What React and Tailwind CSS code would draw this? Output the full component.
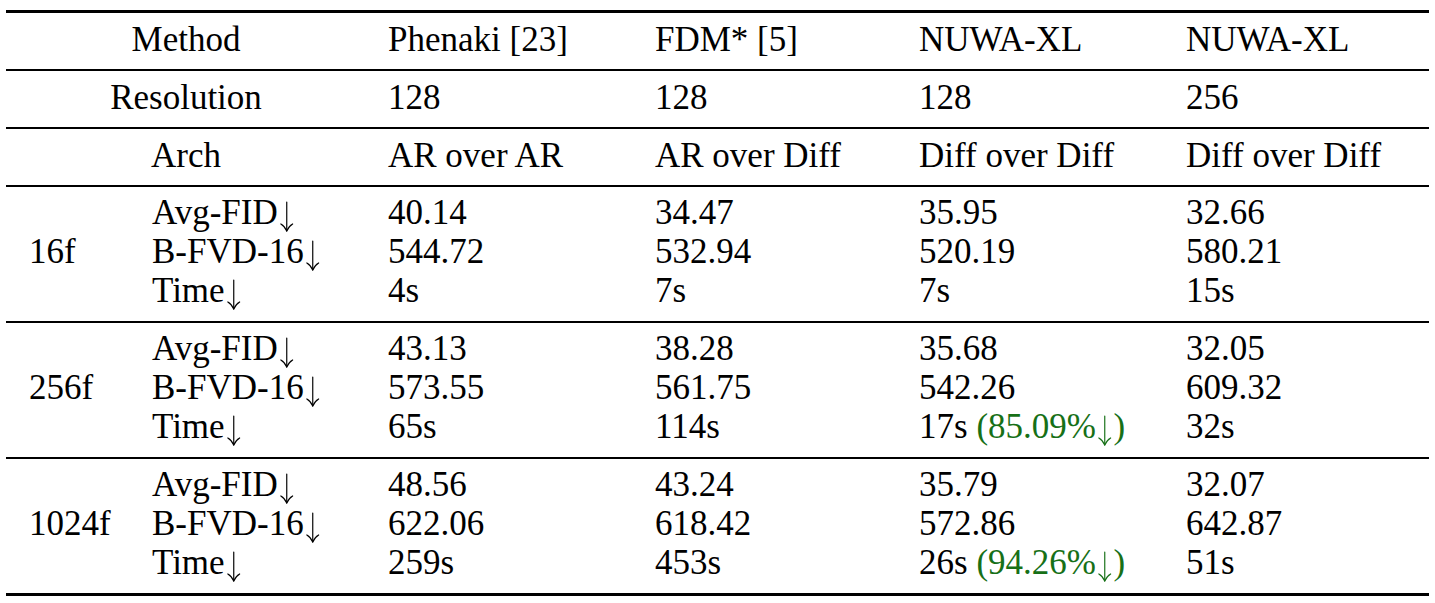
import React from 'react';

const cols = 'grid grid-cols-[146px_236px_267px_264px_267px_243px]';

// thin math-style down arrow (\downarrow)
function Down() {
  return (
    <svg
      viewBox="0 0 50 94"
      className="inline-block w-[0.5em] h-[0.88em] align-[-0.22em]"
      fill="none"
      stroke="currentColor"
      strokeWidth="3.6"
      strokeLinecap="round"
    >
      <path d="M25 3 L25 90" />
      <path d="M7 70 Q19 77 25 92 Q31 77 43 70" />
    </svg>
  );
}

const header = [
  { label: 'Method', cells: ['Phenaki [23]', 'FDM* [5]', 'NUWA-XL', 'NUWA-XL'] },
  { label: 'Resolution', cells: ['128', '128', '128', '256'] },
  { label: 'Arch', cells: ['AR over AR', 'AR over Diff', 'Diff over Diff', 'Diff over Diff'] },
];

const metrics = ['Avg-FID', 'B-FVD-16', 'Time'];

// each column: [fid, fvd, time, gain]
const blocks = [
  {
    frames: '16f',
    data: [
      ['40.14', '544.72', '4s'],
      ['34.47', '532.94', '7s'],
      ['35.95', '520.19', '7s'],
      ['32.66', '580.21', '15s'],
    ],
  },
  {
    frames: '256f',
    data: [
      ['43.13', '573.55', '65s'],
      ['38.28', '561.75', '114s'],
      ['35.68', '542.26', '17s', '85.09%'],
      ['32.05', '609.32', '32s'],
    ],
  },
  {
    frames: '1024f',
    data: [
      ['48.56', '622.06', '259s'],
      ['43.24', '618.42', '453s'],
      ['35.79', '572.86', '26s', '94.26%'],
      ['32.07', '642.87', '51s'],
    ],
  },
];

function HeaderRow({ label, cells }) {
  return (
    <div className={`${cols} h-[58px] items-center border-b-[2px] border-black`}>
      <div className="col-span-2 text-center pr-[22px]">{label}</div>
      {cells.map((c, i) => (
        <div key={i}>{c}</div>
      ))}
    </div>
  );
}

function Line({ children }) {
  return <span className="h-[39px] whitespace-nowrap">{children}</span>;
}

function Block({ frames, data, last }) {
  return (
    <div className={`${cols} pt-[6.5px] pb-[10.5px] leading-[39px] border-black ${last ? 'border-b-[3px]' : 'border-b-[2px]'}`}>
      <div className="flex items-center pl-[23px]">{frames}</div>
      <div className="flex flex-col">
        {metrics.map((m) => (
          <Line key={m}>{m}<Down /></Line>
        ))}
      </div>
      {data.map((col, i) => (
        <div key={i} className="flex flex-col">
          <Line>{col[0]}</Line>
          <Line>{col[1]}</Line>
          <Line>
            {col[2]}
            {col[3] && <span className="text-[#177017]"> ({col[3]}<Down />)</span>}
          </Line>
        </div>
      ))}
    </div>
  );
}

export default function App() {
  return (
    <div className="w-[1435px] h-[603px] bg-white pt-[9.5px] pl-[6px]">
      <div
        className="w-[1423px] text-[35px] text-black border-t-[3px] border-black"
        style={{ fontFamily: '"Liberation Serif", "Times New Roman", serif' }}
      >
        {header.map((h) => (
          <HeaderRow key={h.label} {...h} />
        ))}
        {blocks.map((b, i) => (
          <Block key={b.frames} {...b} last={i === blocks.length - 1} />
        ))}
      </div>
    </div>
  );
}
